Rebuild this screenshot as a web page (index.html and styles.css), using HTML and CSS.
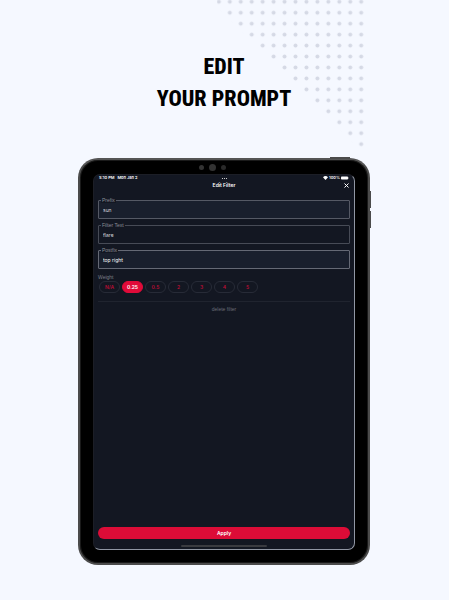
FILE: index.html
```html
<!DOCTYPE html>
<html lang="en">
<head>
    <meta charset="UTF-8">
    <meta name="viewport" content="width=device-width, initial-scale=1.0">
    <title>Edit your prompt</title>
    <link rel="stylesheet" href="styles.css">
</head>
<body>
    <svg class="dots" width="148" height="150" viewBox="0 0 148 150" aria-hidden="true">
        <defs>
            <pattern id="dot" width="10.95" height="10.95" patternUnits="userSpaceOnUse" x="-3.6" y="-3.7">
                <circle cx="5.475" cy="5.475" r="2" fill="#d5d9e5"/>
            </pattern>
        </defs>
        <polygon points="-7,0 147,0 147,154" fill="url(#dot)"/>
    </svg>

    <h1 class="headline">EDIT<br>YOUR PROMPT</h1>

    <div class="tablet">
        <span class="power-button"></span>
        <span class="volume-button volume-up"></span>
        <span class="volume-button volume-down"></span>
        <div class="camera">
            <span class="lens-small"></span>
            <span class="lens"></span>
            <span class="lens-dark"></span>
        </div>

        <div class="screen">
            <div class="status-bar">
                <div class="status-time"><span>5:10 PM</span><span>Mon Jan 2</span></div>
                <div class="status-more"><i></i><i></i><i></i></div>
                <div class="status-icons">
                    <svg width="5" height="4" viewBox="0 0 10 8" fill="#fff">
                        <path d="M5 8 0 2.6C2.8-.8 7.2-.8 10 2.6Z"/>
                    </svg>
                    <span>100%</span>
                    <svg width="8" height="4" viewBox="0 0 16 8" fill="#fff">
                        <rect x="0" y="1" width="14" height="6" rx="1.5"/>
                        <rect x="15" y="3" width="1" height="2"/>
                    </svg>
                </div>
            </div>

            <div class="title-bar">
                <h2>Edit Filter</h2>
                <button class="close-button" type="button" aria-label="Close">
                    <svg width="5" height="5" viewBox="0 0 10 10" stroke="#fff" stroke-width="2">
                        <path d="M1 1 9 9M9 1 1 9"/>
                    </svg>
                </button>
            </div>

            <form class="filter-form">
                <div class="field field-filled">
                    <label for="prefix">Prefix</label>
                    <input type="text" id="prefix" value="sun">
                </div>
                <div class="field">
                    <label for="filterText">Filter Text</label>
                    <input type="text" id="filterText" value="flare">
                </div>
                <div class="field field-filled field-active">
                    <label for="postfix">Postfix</label>
                    <input type="text" id="postfix" value="top right">
                </div>

                <div class="weight-label" id="weightLabel">Weight</div>
                <div class="weights" role="group" aria-labelledby="weightLabel">
                    <button type="button">N/A</button>
                    <button type="button" class="selected">0.25</button>
                    <button type="button">0.5</button>
                    <button type="button">2</button>
                    <button type="button">3</button>
                    <button type="button">4</button>
                    <button type="button">5</button>
                </div>

                <button class="delete-button" type="button">delete filter</button>
                <button class="apply-button" type="button">Apply</button>
            </form>

            <div class="home-indicator"></div>
        </div>
    </div>
</body>
</html>
```

FILE: styles.css
```css
* {
    box-sizing: border-box;
}
body {
    font-family: Inter, "Liberation Sans", sans-serif;
    margin: 0;
    padding: 51px 79px 35px 78px;
    min-height: 100vh;
    display: flex;
    flex-direction: column;
    position: relative;
    background-color: #f5f8ff;
}
button, input {
    font-family: inherit;
    margin: 0;
    padding: 0;
    border: none;
    background: none;
}
button {
    cursor: pointer;
}
svg {
    display: block;
}
.dots {
    position: absolute;
    top: 0;
    right: 84px;
}
.headline {
    font-family: "Roboto Condensed", Roboto, sans-serif;
    font-size: 22px;
    font-weight: 800;
    line-height: 32px;
    margin: 0 0 43px;
    text-align: center;
    color: #000;
    position: relative;
}

/* tablet frame */
.tablet {
    flex: 1;
    display: flex;
    flex-direction: column;
    position: relative;
    padding: 14px 13px 13px;
    border: 2px solid #4b4b4b;
    border-top-color: #555;
    border-radius: 20px;
    background-color: #000;
    box-shadow: inset 0 0 0 1px #1a1a1a;
}
.power-button {
    position: absolute;
    top: -3px;
    right: 18px;
    width: 20px;
    height: 2px;
    background-color: #4b4b4b;
}
.volume-button {
    position: absolute;
    right: -3px;
    width: 2px;
    height: 17px;
    background-color: #4b4b4b;
}
.volume-up {
    top: 31px;
}
.volume-down {
    top: 51px;
}
.camera {
    position: absolute;
    top: 4px;
    left: 0;
    right: 24px;
    display: flex;
    justify-content: center;
    align-items: center;
    gap: 5px;
}
.camera span {
    border-radius: 50%;
    background-color: #333;
}
.camera .lens {
    width: 7px;
    height: 7px;
}
.camera .lens-small {
    width: 5px;
    height: 5px;
}
.camera .lens-dark {
    width: 5px;
    height: 5px;
    background-color: #2a2a2a;
}

/* app */
.screen {
    flex: 1;
    display: flex;
    flex-direction: column;
    padding: 0 4px;
    border: 1px solid #9096a3;
    border-top-color: #1c1e26;
    border-left-color: #1c1e26;
    border-radius: 7px;
    background-color: #131722;
    color: #fff;
}
.status-bar {
    display: grid;
    grid-template-columns: 1fr auto 1fr;
    align-items: center;
    height: 6px;
    padding: 0 1px;
    font-size: 4px;
    font-weight: 600;
    line-height: 6px;
}
.status-time {
    display: flex;
    gap: 3px;
}
.status-more {
    display: flex;
    gap: 1px;
}
.status-more i {
    width: 1px;
    height: 1px;
    background-color: #ccc;
}
.status-icons {
    display: flex;
    justify-content: flex-end;
    align-items: center;
    gap: 1px;
}
.title-bar {
    display: grid;
    grid-template-columns: 1fr auto 1fr;
    align-items: center;
    height: 9px;
    margin-bottom: 10px;
}
.title-bar h2 {
    grid-column: 2;
    margin: 0;
    font-size: 5px;
    font-weight: 600;
    line-height: 9px;
}
.close-button {
    justify-self: end;
    margin-right: 1px;
}
.filter-form {
    flex: 1;
    display: flex;
    flex-direction: column;
}
.field {
    position: relative;
    margin-bottom: 6px;
}
.field label, .weight-label, .delete-button {
    font-family: "Liberation Sans", Arial, sans-serif;
    font-size: 5px;
    line-height: 5px;
}
.field label {
    position: absolute;
    top: -2px;
    left: 3px;
    padding: 0 1px;
    color: #8b8e97;
    background-color: #131722;
}
.field input {
    display: block;
    width: 100%;
    height: 19px;
    padding: 0 4px;
    border: 1px solid #474b56;
    border-radius: 1px;
    font-size: 5px;
    color: #d5d7dc;
}
.field-filled input {
    border-color: #555965;
    background-color: #191f2d;
}
.field-active input {
    border-color: #656975;
    color: #fff;
}
.weight-label {
    margin-bottom: 1px;
    color: #7b7e87;
}
.weights {
    display: flex;
    gap: 2px;
    padding: 0 0 8px 1px;
    border-bottom: 1px solid #20242f;
}
.weights button {
    width: 21px;
    height: 12px;
    border: 1px solid #272b37;
    border-radius: 6px;
    font-size: 5px;
    font-weight: 600;
    line-height: 10px;
    color: #b80d34;
}
.weights .selected {
    border-color: #e00b39;
    background-color: #e00b39;
    color: #fff;
}
.delete-button {
    align-self: center;
    margin-top: 5px;
    color: #6b6e77;
}
.apply-button {
    height: 12px;
    margin-top: auto;
    border-radius: 6px;
    background-color: #dc0c37;
    font-size: 5px;
    font-weight: 600;
    line-height: 12px;
    color: #fff;
}
.home-indicator {
    align-self: center;
    width: 34%;
    height: 2px;
    margin: 6px 0 2px;
    border-radius: 1px;
    background-color: #3a3b40;
}
```
